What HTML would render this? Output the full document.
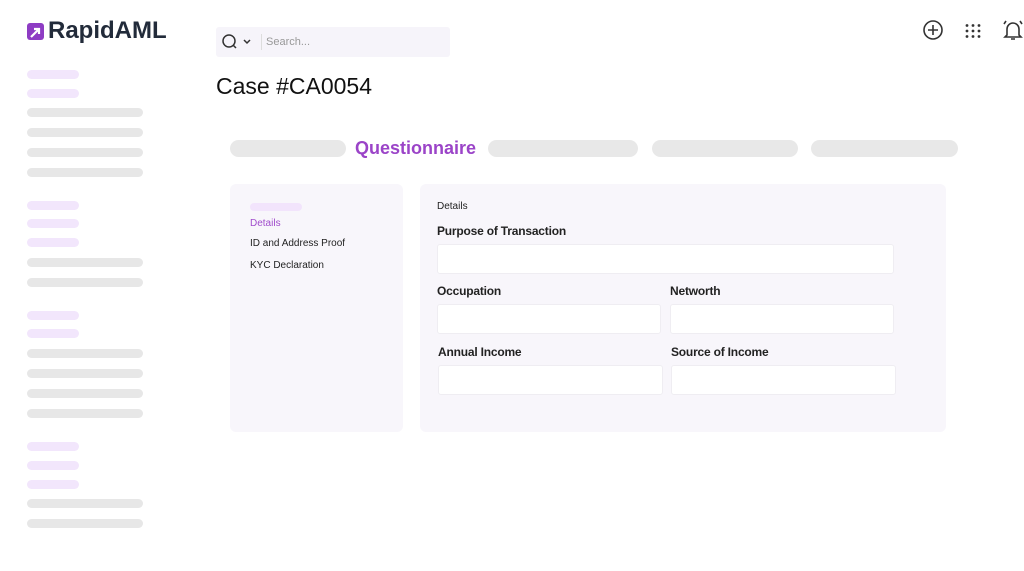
<!DOCTYPE html><html><head><style>
body{margin:0;width:1024px;height:571px;background:#fff;font-family:"Liberation Sans",sans-serif;position:relative;overflow:hidden}
.a{position:absolute}
.p{position:absolute;border-radius:6px;height:9px}
.pu{background:#f2e6fc;width:52px;left:27px}
.g{background:#e7e7e7;width:116px;left:27px}
.t{position:absolute;height:17px;border-radius:9px;background:#e8e8e8;top:140px}
.in{position:absolute;background:#fff;border:1px solid #efedf2;border-radius:3px;height:28px}
.l{position:absolute;font-size:12px;color:#222;font-weight:bold;letter-spacing:-0.2px}
</style></head><body>
<div class="a" style="left:27px;top:23px;width:17px;height:17px;background:#8e3cc4;border-radius:3px"></div>
<svg class="a" style="left:27px;top:23px" width="17" height="17"><path d="M4 14L12 6M7 6h5v5" stroke="#fff" stroke-width="2.2" fill="none"/></svg>
<div class="a" style="left:48px;top:17px;font-size:24px;font-weight:bold;color:#222b3a">RapidAML</div>
<div class="a" style="left:216px;top:27px;width:234px;height:30px;background:#f6f4fa;border-radius:3px"></div>
<svg class="a" style="left:221px;top:34px" width="36" height="16"><circle cx="8" cy="7" r="6" stroke="#333" stroke-width="1.5" fill="none"/><path d="M12 11l3 3M23 6l3 3 3-3" stroke="#333" stroke-width="1.5" fill="none"/></svg>
<div class="a" style="left:261px;top:34px;width:1px;height:16px;background:#ddd"></div>
<div class="a" style="left:266px;top:36px;font-size:11px;color:#999">Search...</div>
<svg class="a" style="left:921px;top:19px" width="24" height="24"><circle cx="12" cy="11" r="9" stroke="#333" stroke-width="1.6" fill="none"/><path d="M12 6v10M7 11h10" stroke="#333" stroke-width="1.6"/></svg>
<svg class="a" style="left:964px;top:23px" width="18" height="16"><g fill="#333"><circle cx="3" cy="2.5" r="1.4"/><circle cx="9" cy="2.5" r="1.4"/><circle cx="15" cy="2.5" r="1.4"/><circle cx="3" cy="8" r="1.4"/><circle cx="9" cy="8" r="1.4"/><circle cx="15" cy="8" r="1.4"/><circle cx="3" cy="13.5" r="1.4"/><circle cx="9" cy="13.5" r="1.4"/><circle cx="15" cy="13.5" r="1.4"/></g></svg>
<svg class="a" style="left:1001px;top:18px" width="24" height="24"><path d="M6 17V11a6 6 0 0112 0v6l2 2H4z M10 21h4 M3 6l2-3 M21 6l-2-3" stroke="#333" stroke-width="1.6" fill="none"/></svg>
<div class="a" style="left:216px;top:73px;font-size:23px;color:#111">Case #CA0054</div>
<div class="p pu" style="top:70px"></div><div class="p pu" style="top:89px"></div>
<div class="p g" style="top:108px"></div><div class="p g" style="top:128px"></div><div class="p g" style="top:148px"></div><div class="p g" style="top:168px"></div>
<div class="p pu" style="top:201px"></div><div class="p pu" style="top:219px"></div><div class="p pu" style="top:238px"></div>
<div class="p g" style="top:258px"></div><div class="p g" style="top:278px"></div>
<div class="p pu" style="top:311px"></div><div class="p pu" style="top:329px"></div>
<div class="p g" style="top:349px"></div><div class="p g" style="top:369px"></div><div class="p g" style="top:389px"></div><div class="p g" style="top:409px"></div>
<div class="p pu" style="top:442px"></div><div class="p pu" style="top:461px"></div><div class="p pu" style="top:480px"></div>
<div class="p g" style="top:499px"></div><div class="p g" style="top:519px"></div>
<div class="t" style="left:230px;width:116px"></div>
<div class="a" style="left:355px;top:138px;font-size:18px;color:#9b44c8;font-weight:bold">Questionnaire</div>
<div class="t" style="left:488px;width:150px"></div><div class="t" style="left:652px;width:146px"></div><div class="t" style="left:811px;width:147px"></div>
<div class="a" style="left:230px;top:184px;width:173px;height:248px;background:#f8f6fb;border-radius:6px"></div>
<div class="a" style="left:250px;top:203px;width:52px;height:8px;background:#f2e4fc;border-radius:5px"></div>
<div class="a" style="left:250px;top:218px;font-size:10px;color:#a04ccc">Details</div>
<div class="a" style="left:250px;top:238px;font-size:10px;color:#222">ID and Address Proof</div>
<div class="a" style="left:250px;top:260px;font-size:10px;color:#222">KYC Declaration</div>
<div class="a" style="left:420px;top:184px;width:526px;height:248px;background:#f8f6fb;border-radius:6px"></div>
<div class="a" style="left:437px;top:201px;font-size:10px;color:#222">Details</div>
<div class="l" style="left:437px;top:224px">Purpose of Transaction</div>
<div class="in" style="left:437px;top:244px;width:455px"></div>
<div class="l" style="left:437px;top:284px">Occupation</div><div class="l" style="left:670px;top:284px">Networth</div>
<div class="in" style="left:437px;top:304px;width:222px"></div><div class="in" style="left:670px;top:304px;width:222px"></div>
<div class="l" style="left:438px;top:345px">Annual Income</div><div class="l" style="left:671px;top:345px">Source of Income</div>
<div class="in" style="left:438px;top:365px;width:223px"></div><div class="in" style="left:671px;top:365px;width:223px"></div>
</body></html>
